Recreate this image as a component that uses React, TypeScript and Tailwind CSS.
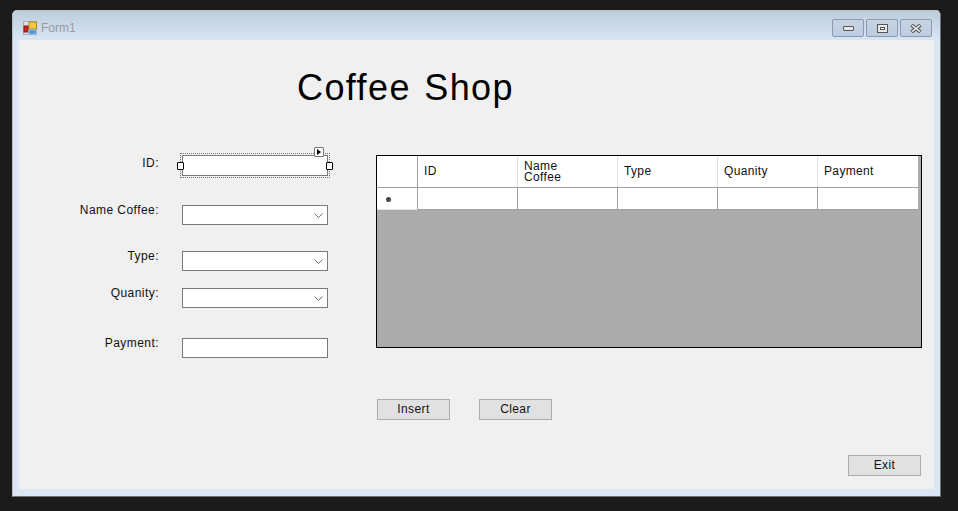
import React from "react";

const font = "font-['Liberation_Sans',Arial,sans-serif]";

const Chevron = () => (
  <svg width="9" height="5" viewBox="0 0 9 5" fill="none" stroke="#6e6e6e" strokeWidth="1" className="absolute right-[4px] top-[7px]">
    <path d="M0.5 0.5 L4.5 4.5 L8.5 0.5" />
  </svg>
);

const FormIcon = () => (
  <svg width="14" height="14" viewBox="0 0 14 14" className="mr-[4px]">
    <rect x="0.5" y="0.5" width="13" height="13" fill="#d9dfe6" stroke="#a9b0b8" />
    <rect x="6" y="1" width="7.5" height="7" fill="#f7c93a" stroke="#a88a1c" />
    <rect x="1" y="5" width="4" height="6" fill="#c8201c" stroke="#8e1a16" />
    <rect x="6" y="9" width="7" height="4" fill="#4d8fe0" stroke="#8fb4e4" />
  </svg>
);

const CaptionButton = ({ children }: { children: React.ReactNode }) => (
  <div className="flex h-[18px] w-[32px] items-center justify-center rounded-[2px] border border-[#8a99b4] bg-gradient-to-b from-[#c6d3e2] to-[#bdcde0]">
    {children}
  </div>
);

const Row = ({ label, mt, labelOffset, combo }: { label: string; mt: string; labelOffset: string; combo?: boolean }) => (
  <div className={`flex ${mt}`}>
    <div className={`w-[140px] text-right text-[12px] leading-[14px] tracking-[0.45px] text-[#111] ${labelOffset}`}>{label}</div>
    <div className="relative ml-[23px] h-[20px] w-[146px] border border-[#7a7a7a] bg-white">{combo && <Chevron />}</div>
  </div>
);

const columns = ["ID", "Name Coffee", "Type", "Quanity", "Payment"];

const Button = ({ label }: { label: string }) => (
  <div className="flex h-[21px] w-[73px] items-center justify-center border border-[#adadad] bg-[#e1e1e1] pb-[2px] text-[12px] tracking-[0.4px] text-[#111]">
    {label}
  </div>
);

const Handle = ({ side }: { side: string }) => <div className={`absolute top-[6px] h-[8px] w-[7px] rounded-[1px] border border-black bg-white ${side}`} />;

export default function App() {
  return (
    <div className={`h-[511px] w-[958px] overflow-hidden bg-[#1b1b1b] pl-[12px] pt-[10px] ${font}`}>
      <div className="flex h-[487px] w-[929px] flex-col rounded-t-[5px] border border-[#6c6f73] border-t-[#c0c4c8] border-l-[#b8bcc0] bg-[#dbe7f4] px-[6px] pb-[7px]">
        {/* title bar */}
        <div className="-mx-[6px] flex h-[29px] items-center rounded-t-[5px] bg-gradient-to-b from-[#bccddc] to-[#d8e6f4] pl-[10px] pr-[8px] pt-[5px]">
          <FormIcon />
          <span className="text-[12px] text-[#9a9a9a]">Form1</span>
          <div className="ml-auto flex gap-[2px]">
            <CaptionButton>
              <div className="h-[5px] w-[11px] rounded-[1px] border border-[#555] bg-[#e8e8e8]" />
            </CaptionButton>
            <CaptionButton>
              <div className="flex h-[9px] w-[11px] items-center justify-center border border-[#555] bg-[#e8e8e8]">
                <div className="h-[3px] w-[5px] border border-[#555] bg-white" />
              </div>
            </CaptionButton>
            <CaptionButton>
              <svg width="12" height="9" viewBox="0 0 12 9" fill="none">
                <path d="M1.5 1 L10.5 8 M10.5 1 L1.5 8" stroke="#5a5a5a" strokeWidth="3.6" />
                <path d="M2 1.4 L10 7.6 M10 1.4 L2 7.6" stroke="#e6e6e6" strokeWidth="1.5" />
              </svg>
            </CaptionButton>
          </div>
        </div>

        {/* client area */}
        <div className="flex h-[449px] w-[915px] flex-col bg-[#f0f0f0]">
          <div className="ml-[278px] mt-[27px] h-[41px] text-[36px] leading-[41px] tracking-[1.4px] [word-spacing:2px] text-black">Coffee Shop</div>

          <div className="mt-[47px] flex">
            {/* fields */}
            <div className="w-[357px]">
              <div className="flex">
                <div className="w-[140px] pt-[1px] text-right text-[12px] leading-[14px] tracking-[0.45px] text-[#111]">ID:</div>
                <div className="relative ml-[23px] h-[21px] w-[146px] border border-[#7a7a7a] bg-white outline outline-1 outline-offset-[1px] outline-dotted outline-[#777]">
                  <Handle side="-left-[6px]" />
                  <Handle side="-right-[6px]" />
                  <div className="absolute -top-[9px] right-[3px] flex h-[10px] w-[10px] items-center justify-center rounded-[1px] border border-[#777] bg-white">
                    <div className="h-0 w-0 border-y-[3px] border-l-[4px] border-y-transparent border-l-black" />
                  </div>
                </div>
              </div>
              <Row label="Name Coffee:" mt="mt-[29px]" labelOffset="-mt-[2px]" combo />
              <Row label="Type:" mt="mt-[26px]" labelOffset="-mt-[2px]" combo />
              <Row label="Quanity:" mt="mt-[17px]" labelOffset="-mt-[2px]" combo />
              <Row label="Payment:" mt="mt-[30px]" labelOffset="-mt-[2px]" />
            </div>

            {/* grid */}
            <div className="h-[193px] w-[546px] border border-black bg-[#ababab]">
              <div className="w-[541px]">
                <div className="flex h-[32px] border-b border-[#a0a0a0] bg-white text-[12px] tracking-[0.35px] text-[#111]">
                  <div className="w-[41px] border-r border-[#a0a0a0]" />
                  {columns.map((c) => (
                    <div key={c} className="flex w-[100px] items-center border-r border-[#e3e3e3] pl-[6px] leading-[11px] last:border-r-0">
                      {c === "Name Coffee" ? <span className="w-[40px]">Name Coffee</span> : c}
                    </div>
                  ))}
                </div>
                <div className="flex h-[22px] bg-white">
                  <div className="flex w-[41px] items-center border-r border-b border-r-[#a0a0a0] border-b-[#e3e3e3] pl-[9px] pt-[1px]">
                    <div className="h-[5px] w-[5px] rounded-full bg-[#444]" />
                  </div>
                  {columns.map((c) => (
                    <div key={c} className="w-[100px] border-r border-b border-[#a0a0a0] last:border-r-0" />
                  ))}
                </div>
              </div>
            </div>
          </div>

          {/* buttons */}
          <div className="ml-[358px] mt-[41px] flex gap-[29px]">
            <Button label="Insert" />
            <Button label="Clear" />
          </div>
          <div className="ml-[829px] mt-[35px]">
            <Button label="Exit" />
          </div>
        </div>
      </div>
    </div>
  );
}
